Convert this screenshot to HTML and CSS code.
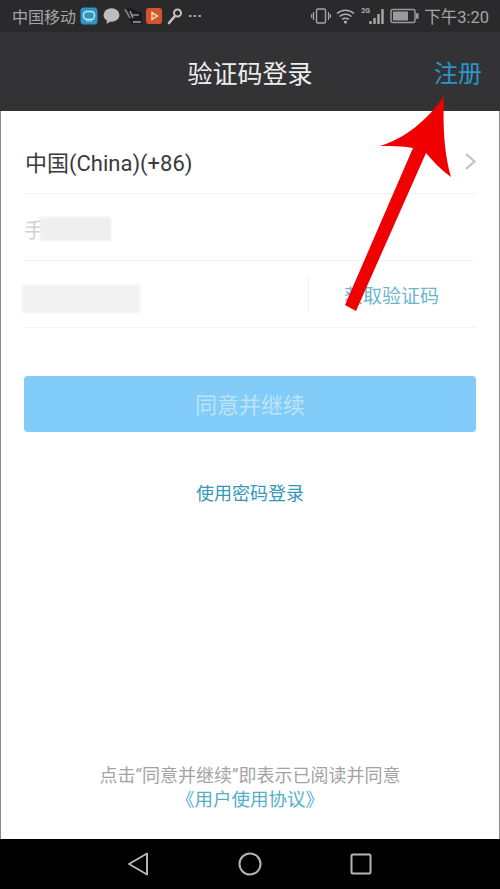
FILE: index.html
```html
<!DOCTYPE html>
<html lang="zh-CN">
<head>
  <meta charset="UTF-8" />
  <meta name="viewport" content="width=device-width, initial-scale=1.0"/>
  <title>验证码登录</title>
  <link rel="stylesheet" href="styles.css">
</head>
<body>
  <div class="phone">
    <div class="statusbar">
      <div class="status-left">
        <span class="carrier">中国移动</span>
        <svg class="ico" width="18" height="18" viewBox="0 0 18 18">
          <rect width="17" height="17" x=".5" y=".5" rx="3.5" fill="#2f95c4"/>
          <rect x="3.5" y="4.5" width="11" height="8" rx="3.5" fill="none" stroke="#cfe6f0" stroke-width="1.4"/>
          <path d="M6 14h6" stroke="#a5d3e6" stroke-width="1.2"/>
        </svg>
        <svg class="ico" width="18" height="18" viewBox="0 0 18 18">
          <ellipse cx="9.5" cy="8" rx="8" ry="6.8" fill="#bdbdbd"/>
          <path d="M5 12.5 4.5 17 9 14z" fill="#bdbdbd"/>
        </svg>
        <svg class="ico" width="18" height="18" viewBox="0 0 18 18">
          <path d="M0 1 6 1 18 6V17H8L3 9z" fill="#191c1e"/>
          <path d="M1 2 6 11" stroke="#6f7a7a" stroke-width="2"/>
          <path d="M6 4 9 11M8 8h7" stroke="#8d9494" stroke-width="1.6"/>
          <path d="M9 15h8" stroke="#7d8484" stroke-width="2"/>
        </svg>
        <svg class="ico" width="17" height="18" viewBox="0 0 17 18">
          <rect y="1" width="16" height="16" rx="3" fill="#d2562a"/>
          <path d="M6 5.500 11.500 9 6 12.500z" fill="none" stroke="#f3d2c0" stroke-width="1.500"/>
        </svg>
        <svg class="ico" width="16" height="18" viewBox="0 0 16 18">
          <circle cx="10.500" cy="6" r="3.500" fill="none" stroke="#c4c4c4" stroke-width="2"/>
          <path d="M8 9 2 16" stroke="#c4c4c4" stroke-width="2.600" stroke-linecap="round"/>
        </svg>
        <svg class="dots" width="12" height="4" viewBox="0 0 12 4">
          <path d="M0 1h2.500v2H0zM4.700 1h2.500v2H4.700zM9.400 1h2.500v2H9.400z" fill="#a9a9a9"/>
        </svg>
      </div>
      <div class="status-right">
        <svg class="ico" width="20" height="16" viewBox="0 0 20 16">
          <rect x="5.500" y="1" width="9" height="14" rx="1.500" fill="none" stroke="#a9a9a9" stroke-width="1.400"/>
          <path d="M2.500 4v8M.7 6v4M17.500 4v8M19.300 6v4" stroke="#a9a9a9" stroke-width="1.200"/>
        </svg>
        <svg class="ico wifi" width="19" height="16" viewBox="0 0 19 16">
          <path d="M1 5.500C6 1 13 1 18 5.500M3.500 8.500C7 5.500 12 5.500 15.500 8.500M6 11.300C8 10 11 10 13 11.300" fill="none" stroke="#b0b0b0" stroke-width="1.500"/>
          <circle cx="9.500" cy="14" r="1.600" fill="#b0b0b0"/>
        </svg>
        <div class="signal">
          <span class="net">2G</span>
          <svg width="17" height="16" viewBox="0 0 17 16">
            <path d="M1.500 16v-3M5.500 16v-6M9.500 16v-10M13.500 16V1" stroke="#a9a9a9" stroke-width="2.400"/>
          </svg>
        </div>
        <svg class="ico battery" width="29" height="16" viewBox="0 0 29 16">
          <rect x="1" y="1.500" width="24" height="13" rx="2" fill="none" stroke="#9a9a9a" stroke-width="1.500"/>
          <rect x="3" y="3.500" width="15" height="9" fill="#9b9b9b"/>
          <rect x="26" y="5" width="2.500" height="6" rx="1" fill="#9a9a9a"/>
        </svg>
        <span class="clock">下午3:20</span>
      </div>
    </div>

    <header class="topbar">
      <h1 class="topbar-title">验证码登录</h1>
      <a class="topbar-link">注册</a>
    </header>

    <main class="content">
      <div class="form-row country-row">
        <span class="country">中国(China)(+86)</span>
        <svg class="chevron" width="13" height="19" viewBox="0 0 13 19">
          <path d="M2 2 10.500 9.500 2 17" fill="none" stroke="#c2c2c2" stroke-width="2.200"/>
        </svg>
      </div>
      <div class="form-row phone-row">
        <span class="hint">手</span>
        <span class="smudge smudge-phone"></span>
      </div>
      <div class="form-row code-row">
        <span class="smudge smudge-code"></span>
        <span class="code-sep"></span>
        <a class="code-link">获取验证码</a>
      </div>

      <button class="submit">同意并继续</button>
      <a class="password-link">使用密码登录</a>

      <footer class="terms">
        <p class="terms-text">点击“同意并继续”即表示已阅读并同意</p>
        <a class="terms-link">《用户使用协议》</a>
      </footer>
    </main>

    <nav class="navbar">
      <svg width="24" height="26" viewBox="0 0 24 26">
        <path d="M21 2.500V23.500L3 13z" fill="none" stroke="#b5b5b5" stroke-width="2" stroke-linejoin="round"/>
      </svg>
      <svg width="24" height="24" viewBox="0 0 24 24">
        <circle cx="12" cy="12" r="10.500" fill="none" stroke="#b5b5b5" stroke-width="2"/>
      </svg>
      <svg width="22" height="22" viewBox="0 0 22 22">
        <rect x="1.500" y="1.500" width="19" height="19" rx="1.500" fill="none" stroke="#b5b5b5" stroke-width="2"/>
      </svg>
    </nav>

    <!-- annotation arrow drawn over the screenshot -->
    <svg class="arrow" width="500" height="889" viewBox="0 0 500 889">
      <path d="M444 96C443 118 443 150 451 177C441 170 433 161 426 153L356 311L345 305L413 148C402 146 391 146 380 146C404 139 428 120 444 96z" fill="#f00000"/>
    </svg>
  </div>
</body>
</html>
```

FILE: styles.css
```css
* {
  box-sizing: border-box;
}

body {
  margin: 0;
  font-family: Roboto, "Noto Sans CJK SC", sans-serif;
  background: #fff;
}

.phone {
  position: relative;
  width: 500px;
  height: 889px;
  display: flex;
  flex-direction: column;
  overflow: hidden;
}

/* status bar */
.statusbar {
  height: 32px;
  background: #2a2a2c;
  display: flex;
  justify-content: space-between;
  align-items: center;
  padding: 0 11px 0 12px;
  color: #a6a6a6;
}

.status-left,
.status-right {
  display: flex;
  align-items: center;
}

.carrier {
  font-size: 16px;
  width: 68px;
}

.status-left .ico {
  margin-right: 4px;
}

.dots {
  margin-left: 2px;
}

.status-right .ico {
  margin-right: 5px;
}

.signal {
  position: relative;
  display: flex;
  align-items: flex-end;
  width: 30px;
  height: 16px;
  justify-content: flex-end;
  padding-right: 4px;
}

.net {
  position: absolute;
  left: 1px;
  top: -1px;
  font-size: 7px;
  font-weight: 700;
  color: #b0b0b0;
}

.clock {
  font-size: 16.500px;
  color: #a6a6a6;
}

/* title bar */
.topbar {
  height: 79px;
  background: #333336;
  display: flex;
  align-items: center;
  justify-content: center;
  position: relative;
}

.topbar-title {
  margin: 0;
  font-size: 25px;
  font-weight: 400;
  color: #eee;
}

.topbar-link {
  position: absolute;
  right: 18px;
  top: 25px;
  font-size: 24px;
  line-height: 34px;
  color: #2a96cc;
}

/* form */
.content {
  flex: 1;
  display: flex;
  flex-direction: column;
  background: #fff;
  border-left: 1px solid #8a8a8a;
  border-right: 1px solid #8a8a8a;
  padding: 0 23px;
}

.form-row {
  display: flex;
  align-items: center;
  border-bottom: 1px solid #f3f3f3;
  height: 67px;
}

.country-row {
  height: 83px;
  justify-content: space-between;
  padding: 18px 0 0 1px;
  margin-right: -1px;
}

.country {
  font-size: 22px;
  color: #3a3a3a;
}

.phone-row {
  padding-top: 4px;
}

.hint {
  font-size: 20px;
  color: #d2d2d2;
  width: 16px;
}

.smudge {
  display: block;
  background: #efefef;
  filter: blur(1px);
}

.smudge-phone {
  width: 71px;
  height: 24px;
}

.smudge-code {
  width: 118px;
  height: 28px;
  margin: 9px 0 0 -2px;
  background: #f2f2f2;
}

.code-sep {
  width: 1px;
  height: 36px;
  background: #f3f3f3;
  margin-left: 168px;
}

.code-link {
  font-size: 19px;
  color: #6db5cf;
  margin-left: 35px;
}

.submit {
  margin-top: 48px;
  height: 56px;
  width: 452px;
  flex: none;
  border: none;
  border-radius: 4px;
  background: #81ccf8;
  color: #bfe3f7;
  font-family: inherit;
  font-size: 22px;
  padding: 0 0 2px;
}

.password-link {
  margin-top: 48px;
  text-align: center;
  font-size: 18px;
  line-height: 28px;
  color: #3596b8;
}

.terms {
  margin-top: auto;
  padding-bottom: 26px;
  text-align: center;
}

.terms-text {
  margin: 0;
  font-size: 18px;
  line-height: 25px;
  color: #a3a3a3;
}

.terms-link {
  display: block;
  font-size: 18.500px;
  line-height: 25px;
  color: #55aec8;
}

/* android nav keys */
.navbar {
  height: 50px;
  background: #000;
  display: flex;
  align-items: center;
  gap: 88px;
  padding-left: 126px;
}

/* red annotation */
.arrow {
  position: absolute;
  left: 0;
  top: 0;
  pointer-events: none;
}
```
